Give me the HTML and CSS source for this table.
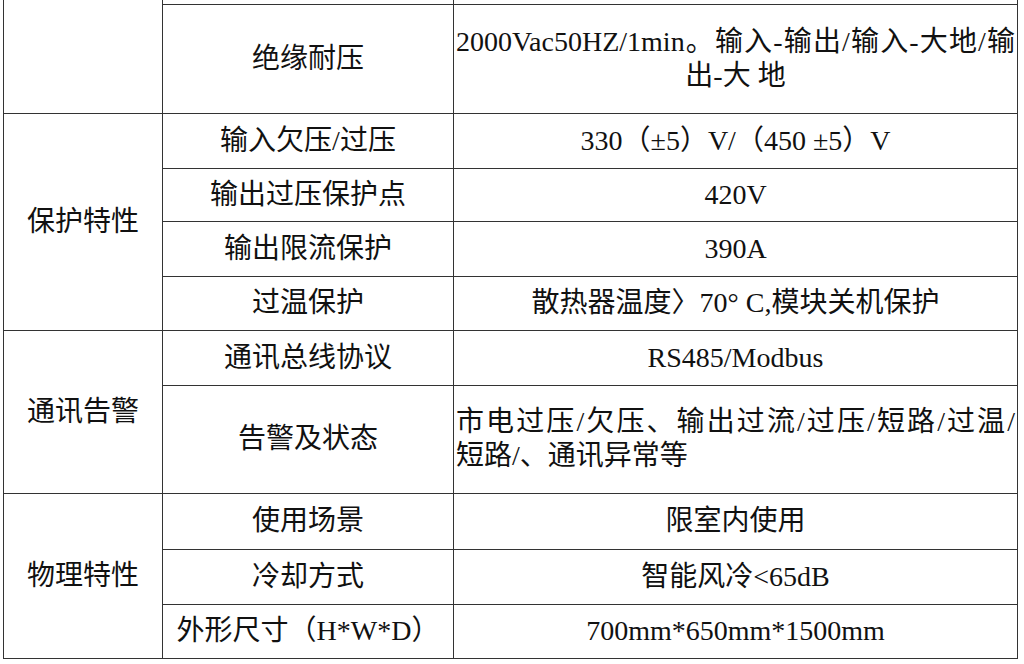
FILE: index.html
```html
<!DOCTYPE html>
<html lang="zh-CN">
<head>
<meta charset="utf-8">
<title>技术参数</title>
<link rel="stylesheet" href="styles.css">
</head>
<body>
<div class="sheet">
  <table class="spec">
    <colgroup>
      <col class="col-group">
      <col class="col-label">
      <col class="col-value">
    </colgroup>
    <tr class="row-cut">
      <td class="group group-cut" rowspan="2"></td>
      <td class="cut"></td>
      <td class="cut"></td>
    </tr>
    <tr class="row-h109">
      <td class="label">绝缘耐压</td>
      <td class="value value-two">
        <span class="line-full">2000Vac50HZ/1min。输入-输出/输入-大地/输</span>
        <span class="line-center">出-大 地</span>
      </td>
    </tr>
    <tr class="row-h55">
      <td class="group" rowspan="4">保护特性</td>
      <td class="label">输入欠压/过压</td>
      <td class="value">330（±5）V/（450 ±5）V</td>
    </tr>
    <tr class="row-h53">
      <td class="label">输出过压保护点</td>
      <td class="value">420V</td>
    </tr>
    <tr class="row-h55">
      <td class="label">输出限流保护</td>
      <td class="value">390A</td>
    </tr>
    <tr class="row-h54">
      <td class="label">过温保护</td>
      <td class="value">散热器温度〉70° C,模块关机保护</td>
    </tr>
    <tr class="row-h55">
      <td class="group" rowspan="2">通讯告警</td>
      <td class="label">通讯总线协议</td>
      <td class="value">RS485/Modbus</td>
    </tr>
    <tr class="row-h108">
      <td class="label">告警及状态</td>
      <td class="value value-left">
        <span class="line-full">市电过压/欠压、输出过流/过压/短路/过温/</span>
        <span class="line-left">短路/、通讯异常等</span>
      </td>
    </tr>
    <tr class="row-h56">
      <td class="group" rowspan="3">物理特性</td>
      <td class="label">使用场景</td>
      <td class="value">限室内使用</td>
    </tr>
    <tr class="row-h55">
      <td class="label">冷却方式</td>
      <td class="value">智能风冷&lt;65dB</td>
    </tr>
    <tr class="row-h54">
      <td class="label">外形尺寸（H*W*D）</td>
      <td class="value">700mm*650mm*1500mm</td>
    </tr>
  </table>
</div>
</body>
</html>
```

FILE: styles.css
```css
html, body {
  margin: 0;
  padding: 0;
  background: #ffffff;
}

body {
  font-family: "Liberation Serif", "Noto Sans CJK SC", serif;
  font-size: 28px;
  color: #111111;
}

.sheet {
  padding-left: 3px;
}

.spec {
  border-collapse: collapse;
  table-layout: fixed;
  width: 1014px;
}

.col-group { width: 159px; }
.col-label { width: 291px; }
.col-value { width: 564px; }

.spec td {
  border: 1px solid #333333;
  padding: 0 2px;
  text-align: center;
  vertical-align: middle;
  line-height: 34px;
  white-space: nowrap;
}

.spec td.cut,
.spec td.group-cut {
  border-top: hidden;
}

.row-cut { height: 4px; }
.row-h109 { height: 109px; }
.row-h108 { height: 108px; }
.row-h56 { height: 56px; }
.row-h55 { height: 55px; }
.row-h54 { height: 54px; }
.row-h53 { height: 53px; }

.value-two {
  line-height: 40px;
}

.value-left {
  text-align: left;
  line-height: 35px;
}

.line-full {
  display: block;
  text-align: justify;
  text-align-last: justify;
  text-justify: inter-character;
}

.line-center {
  display: block;
  text-align: center;
}

.line-left {
  display: block;
  text-align: left;
}
```
